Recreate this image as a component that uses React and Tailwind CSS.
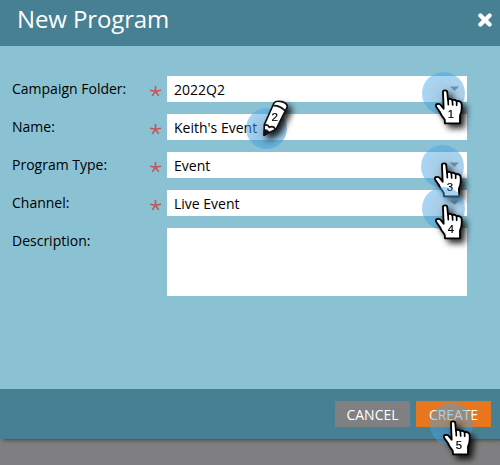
const Hand = ({ n, className }) => (
  <div className={`absolute h-[64px] w-[64px] ${className}`}>
    <div className="absolute left-0 top-0 h-[43px] w-[43px] rounded-full bg-[radial-gradient(circle_at_58%_62%,rgba(70,135,185,0.52)_0%,rgba(75,155,210,0.48)_40%,rgba(65,165,235,0.46)_70%,rgba(75,175,240,0.5)_100%)]" />
    <svg
      className="absolute left-0 top-0 overflow-visible drop-shadow-[4px_4px_3px_rgba(0,0,0,0.85)]"
      width="64"
      height="64"
      viewBox="66 20 192 192"
    >
      <path
        d="M129 82 Q128 75 135 75 Q142 75 142 82 L144 103 Q150 97 157 104 Q165 101 170 108 Q177 105 183 111 Q186 115 185 130 Q185 140 180 150 L180 174 L135 174 L134 163 Q124 152 119 139 L109 125 Q105 116 113 116 Q119 115 124 121 L131 130 Z"
        fill="#fff"
        stroke="#000"
        strokeWidth="5.5"
        strokeLinejoin="round"
      />
      <path d="M144 100 L145 118 M157 103 L158 119 M170 107 L170 120" fill="none" stroke="#000" strokeWidth="5" strokeLinecap="round" />
      <text x="153" y="159" textAnchor="middle" fontFamily="Liberation Sans, sans-serif" fontSize="34" fill="#000" stroke="#000" strokeWidth="0.6">{n}</text>
    </svg>
  </div>
);

const Pencil = () => (
  <div className="absolute left-[246px] top-[98px] h-[56px] w-[60px]">
    <div className="absolute left-0 top-[10px] h-[41px] w-[41px] rounded-full bg-[radial-gradient(circle_at_55%_58%,rgba(60,135,195,0.6)_0%,rgba(70,155,215,0.52)_45%,rgba(70,170,235,0.48)_75%,rgba(75,175,240,0.5)_100%)]" />
    <svg
      className="absolute left-0 top-0 overflow-visible drop-shadow-[4px_4px_3px_rgba(0,0,0,0.85)]"
      width="60"
      height="56"
      viewBox="48 24 180 168"
    >
      <path d="M102 136 L103 104 L132 39 Q138 31 155 35 Q172 39 172 51 L138 118 Z" fill="#fff" stroke="#111" strokeWidth="5" strokeLinejoin="round" />
      <path d="M103 106 Q113 102 118 112 Q130 106 137 119 M130 47 Q149 46 165 62" fill="none" stroke="#111" strokeWidth="5" />
      <path d="M102 137 L103 119 Q113 118 119 127 Z" fill="#111" stroke="#111" strokeWidth="3" />
      <text x="134" y="93" textAnchor="middle" fontFamily="Liberation Sans, sans-serif" fontSize="35" fill="#000" stroke="#000" strokeWidth="0.6">2</text>
    </svg>
  </div>
);

const rows = [
  { label: 'Campaign Folder:', value: '2022Q2', select: true },
  { label: 'Name:', value: "Keith's Event" },
  { label: 'Program Type:', value: 'Event', select: true },
  { label: 'Channel:', value: 'Live Event', select: true },
];

const Required = () => (
  <svg className="mr-[5px] mt-[9px] shrink-0" width="13" height="13" viewBox="0 0 13 13">
    <path d="M6.5 6.2V1M6.5 6.2L1 5.2M6.5 6.2L12 5.2M6.5 6.2L3.3 10.9M6.5 6.2L9.7 10.9" stroke="#c0565a" strokeWidth="1.6" />
  </svg>
);

export default function App() {
  return (
    <div className="relative h-[465px] w-[500px] overflow-hidden bg-[#7f7f81] font-['Open_Sans','Noto_Sans',sans-serif] text-[14px] text-black">
      <div className="flex h-[439px] flex-col bg-[#8ac1d3] shadow-[3px_1px_4px_rgba(0,0,0,0.5)]">
        <header className="flex h-[46px] items-start justify-between bg-[#478092] pl-[17px] pr-2">
          <h1 className="mt-[2px] text-[24px] leading-[34px] tracking-[-0.12px] text-white">New Program</h1>
          <svg className="mt-[13px]" width="14" height="14" viewBox="0 0 14 14">
            <path d="M2.4 2.4L11.6 11.6M11.6 2.4L2.4 11.6" stroke="#fff" strokeWidth="4.2" strokeLinecap="round" />
          </svg>
        </header>
        <main className="flex flex-1 flex-col gap-3 pl-3 pt-[30px]">
          {rows.map((row) => (
            <div key={row.label} className="flex h-[26px]">
              <div className="w-[137px] leading-[26px]">{row.label}</div>
              <Required />
              <div className="flex w-[300px] items-center justify-between bg-white pl-[7px] pr-[8px] leading-[26px]">
                <span className="relative top-px">{row.value}</span>
                {row.select && (
                  <svg width="9" height="5" viewBox="0 0 9 5" className="mb-[2px]">
                    <path d="M0 0.5H9L4.5 5Z" fill="#888" />
                  </svg>
                )}
              </div>
            </div>
          ))}
          <div className="flex h-[68px]">
            <div className="w-[155px] leading-[26px]">Description:</div>
            <div className="w-[300px] bg-white" />
          </div>
        </main>
        <footer className="flex h-[50px] gap-[6px] bg-[#478092] pl-[335px] pt-3 text-white">
          <div className="h-[26px] w-[75px] bg-[#808082] text-center leading-[27px]">CANCEL</div>
          <div className="h-[26px] w-[75px] bg-[#e8761c] text-center leading-[27px] tracking-[-0.1px]">CREATE</div>
        </footer>
      </div>
      <Hand n="1" className="left-[422px] top-[72px]" />
      <Pencil />
      <Hand n="3" className="left-[421px] top-[145px]" />
      <Hand n="4" className="left-[422px] top-[187px]" />
      <Hand n="5" className="left-[430px] top-[403px]" />
    </div>
  );
}
